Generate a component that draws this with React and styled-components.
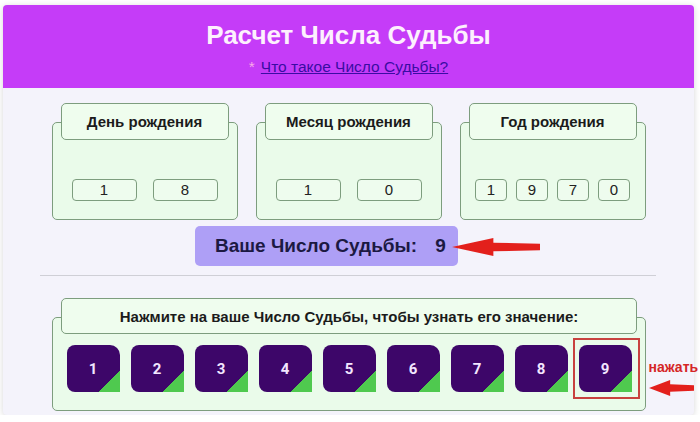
import React from "react";
import styled, { createGlobalStyle } from "styled-components";

const GlobalStyle = createGlobalStyle`
  body {
    margin: 0;
    background: #ffffff;
    font-family: "Liberation Sans", Arial, sans-serif;
  }
`;

const birthGroups = [
  { title: "День рождения", digits: ["1", "8"], cell: 65, gap: 16 },
  { title: "Месяц рождения", digits: ["1", "0"], cell: 65, gap: 16 },
  { title: "Год рождения", digits: ["1", "9", "7", "0"], cell: 32, gap: 9 },
];

const numbers = [1, 2, 3, 4, 5, 6, 7, 8, 9];

function LeftArrow({ width, height }) {
  const mid = height / 2;
  const head = width * 0.47;
  const shaft = height * 0.26;
  return (
    <svg width={width} height={height} viewBox={`0 0 ${width} ${height}`}>
      <path
        d={`M0 ${mid} L${head} 0 L${head} ${shaft} L${width} ${shaft + 1} L${width} ${
          height - shaft - 1
        } L${head} ${height - shaft} L${head} ${height} Z`}
        fill="#e3201c"
      />
    </svg>
  );
}

export default function App() {
  return (
    <Page>
      <GlobalStyle />
      <Card>
        <Header>
          <Title>Расчет Числа Судьбы</Title>
          <Sub>
            <Star>*</Star>
            <HelpLink href="#">Что такое Число Судьбы?</HelpLink>
          </Sub>
        </Header>

        <GroupRow>
          {birthGroups.map((g) => (
            <Group key={g.title}>
              <Tab>{g.title}</Tab>
              <Panel $gap={g.gap}>
                {g.digits.map((d, i) => (
                  <DigitCell key={i} $width={g.cell}>
                    {d}
                  </DigitCell>
                ))}
              </Panel>
            </Group>
          ))}
        </GroupRow>

        <ResultRow>
          <ResultBox>
            Ваше Число Судьбы:<ResultValue>9</ResultValue>
            <ResultArrow>
              <LeftArrow width={88} height={18} />
            </ResultArrow>
          </ResultBox>
        </ResultRow>

        <Rule />

        <PickGroup>
          <Tab $small>Нажмите на ваше Число Судьбы, чтобы узнать его значение:</Tab>
          <TilePanel>
            {numbers.map((n) => (
              <Tile key={n} $marked={n === 9}>
                {n}
                {n === 9 && (
                  <>
                    <Callout>нажать</Callout>
                    <CalloutArrow>
                      <LeftArrow width={45} height={16} />
                    </CalloutArrow>
                  </>
                )}
              </Tile>
            ))}
          </TilePanel>
        </PickGroup>
      </Card>
    </Page>
  );
}

const Page = styled.div`
  padding: 5px 6px 0 3px;
`;

const Card = styled.div`
  width: 691px;
  height: 410px;
  background-color: #f4f3fb;
  border-radius: 4px;
  box-shadow: 0 1px 6px rgba(0, 0, 0, 0.16);
`;

const Header = styled.div`
  height: 83px;
  box-sizing: border-box;
  padding-top: 15px;
  background-color: #c53cf8;
  border-radius: 4px 4px 0 0;
  text-align: center;
`;

const Title = styled.h1`
  margin: 0;
  font-size: 26px;
  line-height: 30px;
  font-weight: bold;
  color: #fdf0fd;
`;

const Sub = styled.div`
  margin-top: 7px;
  font-size: 15.5px;
  line-height: 19px;
`;

const Star = styled.span`
  color: #f8a8e8;
  margin-right: 6px;
`;

const HelpLink = styled.a`
  color: #3a0ca3;
  text-decoration: underline;
`;

const GroupRow = styled.div`
  display: flex;
  justify-content: center;
  gap: 18px;
  padding-top: 15px;
`;

const Group = styled.div`
  width: 186px;
  display: flex;
  flex-direction: column;
`;

const Tab = styled.div`
  position: relative;
  z-index: 1;
  margin: 0 9px;
  height: ${(p) => (p.$small ? 36 : 37)}px;
  box-sizing: border-box;
  display: flex;
  align-items: center;
  justify-content: center;
  background-color: #effdee;
  border: 1px solid #7d9d7e;
  border-radius: 5px;
  font-size: 15px;
  font-weight: bold;
  color: #1b1b1b;
`;

const Panel = styled.div`
  margin-top: -18px;
  height: 98px;
  box-sizing: border-box;
  padding-top: 56px;
  display: flex;
  justify-content: center;
  gap: ${(p) => p.$gap}px;
  background-color: #eafbea;
  border: 1px solid #7d9d7e;
  border-radius: 5px;
`;

const DigitCell = styled.div`
  width: ${(p) => p.$width}px;
  height: 22px;
  box-sizing: border-box;
  border: 1px solid #7d9d7e;
  border-radius: 4px;
  background-color: #eefcee;
  font-size: 15px;
  line-height: 20px;
  text-align: center;
  color: #222222;
`;

const ResultRow = styled.div`
  margin-top: 6px;
  padding-left: 192px;
`;

const ResultBox = styled.div`
  position: relative;
  width: 263px;
  height: 40px;
  box-sizing: border-box;
  padding-left: 20px;
  display: flex;
  align-items: center;
  background-color: #ae9ff6;
  border-radius: 5px;
  font-size: 19px;
  font-weight: bold;
  color: #1c1942;
`;

const ResultValue = styled.span`
  margin-left: 18px;
`;

const ResultArrow = styled.div`
  position: absolute;
  left: calc(100% - 6px);
  top: 12px;
  line-height: 0;
`;

const Rule = styled.div`
  margin: 9px 38px 0 37px;
  height: 1px;
  background-color: #cfcfd6;
`;

const PickGroup = styled.div`
  margin: 22px 48px 0 49px;
  display: flex;
  flex-direction: column;
`;

const TilePanel = styled.div`
  margin-top: -17px;
  height: 94px;
  box-sizing: border-box;
  padding-top: 27px;
  display: flex;
  justify-content: center;
  gap: 11px;
  background-color: #eafbea;
  border: 1px solid #7d9d7e;
  border-radius: 5px;
`;

const Tile = styled.div`
  position: relative;
  width: 53px;
  height: 47px;
  display: flex;
  align-items: center;
  justify-content: center;
  border-radius: 8px 10px 0 8px;
  background: linear-gradient(
    135deg,
    #3d0669 calc(100% - 15.5px),
    #4fc94f calc(100% - 15.5px)
  );
  color: #f3e6ff;
  font-family: Roboto, "Liberation Sans", sans-serif;
  font-size: 15px;
  font-weight: bold;
  cursor: pointer;

  ${(p) =>
    p.$marked &&
    `
    &::before {
      content: "";
      position: absolute;
      inset: -7px -8px -7px -6px;
      border: 2px solid #c8423f;
    }
  `}
`;

const Callout = styled.span`
  position: absolute;
  left: 70px;
  top: 14px;
  white-space: nowrap;
  color: #d52626;
  font-family: "Liberation Sans", Arial, sans-serif;
  font-size: 14px;
  font-weight: bold;
`;

const CalloutArrow = styled.div`
  position: absolute;
  left: 70px;
  top: 35px;
  line-height: 0;
`;
